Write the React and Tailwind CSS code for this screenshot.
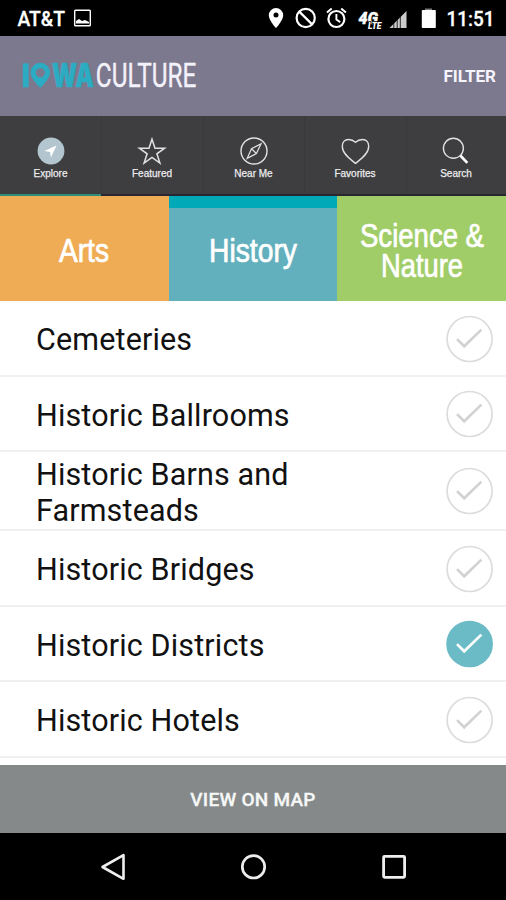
import { useState } from 'react';

const NAV_ITEMS = [
  { name: 'Explore', width: 'w-[101px]' },
  { name: 'Featured', width: 'w-[102px]' },
  { name: 'Near Me', width: 'w-[101px]' },
  { name: 'Favorites', width: 'w-[102px]' },
  { name: 'Search', width: 'w-[100px]' },
];

const TABS = [
  { label: 'Arts', lines: [{ text: 'Arts', width: 50 }], bg: 'bg-[#efac55]', bar: 'bg-[#efac55]' },
  { label: 'History', lines: [{ text: 'History', width: 88 }], bg: 'bg-[#62b0bd]', bar: 'bg-[#00a9b7]' },
  {
    label: 'Science & Nature',
    lines: [{ text: 'Science &', width: 124 }, { text: 'Nature', width: 82 }],
    bg: 'bg-[#a0cd67]',
    bar: 'bg-[#a0cd67]',
  },
];

const CATEGORIES = [
  { name: 'Cemeteries', height: 'h-[76px]' },
  { name: 'Historic Ballrooms', height: 'h-[75px]' },
  { name: 'Historic Barns and Farmsteads', height: 'h-[79px]' },
  { name: 'Historic Bridges', height: 'h-[76px]' },
  { name: 'Historic Districts', height: 'h-[75px]' },
  { name: 'Historic Hotels', height: 'h-[76px]' },
];

function StatusBar() {
  return (
    <div className="flex h-9 shrink-0 items-center bg-black text-white">
      <svg viewBox="0 0 506 36" className="h-9 w-full" fill="none" stroke="#fff">
        <g fill="#fff" stroke="#fff" strokeWidth="0.3" fontFamily="Roboto, sans-serif" fontWeight="500">
          <text x="17.5" y="26" fontSize="20.5" textLength="47.5" lengthAdjust="spacingAndGlyphs">AT&amp;T</text>
          <text x="446.5" y="26" fontSize="20.5" textLength="48" lengthAdjust="spacingAndGlyphs">11:51</text>
        </g>
        {/* picture */}
        <rect x="74.7" y="10.2" width="15.6" height="15.6" rx="0.8" strokeWidth="1.4" />
        <path d="M76 23.5v-2.5l3-2 3 2 3-1 4 2v1.5z" fill="#fff" stroke="none" />
        {/* location */}
        <path
          d="M276 8a7.2 7.2 0 0 0-7.2 7.3c0 5 7.2 12.9 7.2 12.9s7.2-7.9 7.2-12.9A7.2 7.2 0 0 0 276 8zm0 4.6a2.5 2.5 0 1 1 0 5 2.5 2.5 0 0 1 0-5z"
          fill="#fff"
          fillRule="evenodd"
          stroke="none"
        />
        {/* blocked */}
        <circle cx="305.7" cy="18" r="9.1" strokeWidth="2.2" />
        <path d="M299.3 11.6l12.8 12.8" strokeWidth="2.2" />
        {/* alarm */}
        <circle cx="336.4" cy="19" r="8" strokeWidth="2.2" />
        <path d="M336.4 14v5.5l3.8 2.6" strokeWidth="1.9" />
        <path d="M327 12.5l4.7-4M341.2 8.5l4.7 4" strokeWidth="2" />
        {/* network */}
        <g fill="#fff" fontFamily="Roboto, sans-serif" fontWeight="900" fontStyle="italic">
          <text x="358.5" y="23.5" fontSize="16" stroke="#fff" strokeWidth="0.4" textLength="19.5" lengthAdjust="spacingAndGlyphs">4G</text>
          <text x="368" y="28.6" fontSize="8.4" stroke="#000" strokeWidth="1.4" paintOrder="stroke" textLength="13.5" lengthAdjust="spacingAndGlyphs">LTE</text>
        </g>
        {/* signal */}
        <path d="M389.5 28l17-17v17z" fill="#ccc" stroke="none" />
        <path d="M393.8 22v7M397.2 18v11M400.3 15v14" stroke="#000" strokeWidth="0.8" />
        {/* battery */}
        <path d="M425 8.5h7v2h-7z" fill="#777" stroke="none" />
        <rect x="421.8" y="10" width="14" height="18" rx="0.8" fill="#fff" stroke="none" />
      </svg>
    </div>
  );
}

function Logo() {
  return (
    <svg viewBox="0 0 176 48" className="h-12 w-[176px] overflow-visible" role="img" aria-label="Iowa Culture">
      <g fill="#2cacc3" stroke="#2cacc3" fontFamily="Inter, sans-serif" fontWeight="900" fontSize="33">
        <rect x="0.8" y="11.3" width="5.8" height="24" stroke="none" />
        <path
          d="M18.3 10.8a9.7 9.7 0 0 0-9.7 9.8c0 6.4 9.7 15.4 9.7 15.4s9.7-9 9.7-15.4a9.7 9.7 0 0 0-9.7-9.8zm0 5.4a4.6 4.6 0 1 1 0 9.2 4.6 4.6 0 0 1 0-9.2z"
          fillRule="evenodd"
          stroke="none"
        />
        <text x="29.8" y="35.3" strokeWidth="0.4" textLength="42" lengthAdjust="spacingAndGlyphs">WA</text>
      </g>
      <text x="73.8" y="35.3" fill="#f3f2fb" stroke="#f3f2fb" strokeWidth="0.4" fontFamily="Roboto, sans-serif" fontSize="33.5" textLength="100.6" lengthAdjust="spacingAndGlyphs">
        CULTURE
      </text>
    </svg>
  );
}

function NavIcon({ name }) {
  return (
    <svg viewBox="0 0 30 30" className="h-[30px] w-[30px]" fill="none" stroke="#e2e2e4" strokeWidth="1.4">
      {name === 'Explore' && (
        <>
          <circle cx="15" cy="15" r="13.4" fill="#b3c6d0" stroke="none" />
          <path d="M20.5 9.5l-12 5.6 5.6.8.8 5.6z" fill="#fff" stroke="none" />
        </>
      )}
      {name === 'Featured' && (
        <path d="M15 3.2l3 9h9.6l-7.7 5.6 3 9.2-7.9-5.7L7.1 27l3-9.2-7.7-5.6H12z" strokeWidth="1.5" />
      )}
      {name === 'Near Me' && (
        <>
          <circle cx="15" cy="15" r="13" />
          <path d="M22 7.8l-9.5 5-4.3 9.5 9.2-4.8zM12.5 12.8l4.9 4.7" strokeWidth="1.2" />
        </>
      )}
      {name === 'Favorites' && (
        <path d="M15.5 27.4C11.5 23.9 2.3 18.5 2.3 10.3 2.3 6 5 3.5 8.5 3.5c3.1 0 5.1 1 7 2.8 1.9-1.8 3.9-2.8 7-2.8 3.5 0 6.2 2.5 6.2 6.8 0 8.2-9.2 13.6-13.2 17.1z" />
      )}
      {name === 'Search' && (
        <>
          <circle cx="12.4" cy="12.3" r="10" />
          <path d="M19.3 19.5l7 7.3" stroke="#fff" strokeWidth="2.6" />
        </>
      )}
    </svg>
  );
}

function CheckMark({ checked }) {
  return (
    <svg viewBox="0 0 48 48" className="mt-px h-12 w-12 shrink-0" fill="none">
      <circle
        cx="23.6"
        cy="24"
        r="22.5"
        strokeWidth="1.7"
        className={checked ? 'fill-[#6abbc6] stroke-[#6abbc6]' : 'fill-white stroke-[#dcdcdc]'}
      />
      <path d="M11 24.1l7.2 7.2L35.4 14.6" strokeWidth="2.7" className={checked ? 'stroke-white' : 'stroke-[#d2d2d2]'} />
    </svg>
  );
}

export default function App() {
  const [activeNav, setActiveNav] = useState('Explore');
  const [selected, setSelected] = useState(['Historic Districts']);

  const toggle = (name) => {
    setSelected((list) => (list.includes(name) ? list.filter((n) => n !== name) : [...list, name]));
  };

  return (
    <div className="flex h-[900px] w-[506px] flex-col overflow-hidden bg-white font-['Roboto',sans-serif]">
      <StatusBar />

      <header className="flex h-20 shrink-0 items-center justify-between bg-[#7c788d] pr-[10px] pl-[22px]">
        <Logo />
        <button className="pt-[2px] text-[17px] font-bold text-[#f5f4fc]">FILTER</button>
      </header>

      <nav className="flex h-20 shrink-0 bg-[#3e3e40]">
        {NAV_ITEMS.map(({ name, width }) => (
          <button
            key={name}
            onClick={() => setActiveNav(name)}
            className={`flex flex-col items-center border-b-2 pt-5 ${width} ${
              activeNav === name ? 'border-[#2d8c7c]' : 'border-[#29262f] shadow-[inset_1px_0_0_#39393b]'
            }`}
          >
            <NavIcon name={name} />
            <span className="mt-[2px] font-['Liberation_Sans',sans-serif] text-[10px] leading-3 text-[#ececee] [-webkit-text-stroke:0.25px_#ececee]">
              {name}
            </span>
          </button>
        ))}
      </nav>

      <div className="grid h-[105px] shrink-0 grid-cols-3">
        {TABS.map((tab) => (
          <button key={tab.label} className={`flex flex-col ${tab.bg}`}>
            <span className={`h-3 w-full shrink-0 ${tab.bar}`} />
            <span className="flex w-full flex-1 flex-col items-center justify-center pb-[5px]">
              {tab.lines.map((line) => (
                <svg key={line.text} width={line.width} height="30" className="overflow-visible">
                  <text
                    x="0"
                    y="25"
                    fill="#fff"
                    stroke="#fff"
                    strokeWidth="0.7"
                    fontFamily="Liberation Sans, sans-serif"
                    fontSize="32.5"
                    textLength={line.width}
                    lengthAdjust="spacingAndGlyphs"
                  >
                    {line.text}
                  </text>
                </svg>
              ))}
            </span>
          </button>
        ))}
      </div>

      <ul className="flex-1 overflow-hidden">
        {CATEGORIES.map((item) => (
          <li
            key={item.name}
            onClick={() => toggle(item.name)}
            className={`flex items-center justify-between border-b-2 border-[#f0f0f0] pr-3 pl-9 ${item.height}`}
          >
            <span className="w-[300px] pt-1 text-[30.5px] leading-9 tracking-[0.15px] text-[#111]">{item.name}</span>
            <CheckMark checked={selected.includes(item.name)} />
          </li>
        ))}
      </ul>

      <button className="h-[68px] shrink-0 bg-[#858989] pt-[3px] text-[19px] font-medium tracking-[0.25px] text-[#f6f8f8] [-webkit-text-stroke:0.3px_#f6f8f8]">
        VIEW ON MAP
      </button>

      <div className="flex h-[67px] shrink-0 items-center justify-between bg-black px-[98px]">
        <svg viewBox="0 0 30 30" className="h-[30px] w-[30px]" fill="none" stroke="#eee" strokeWidth="2.6" strokeLinejoin="round">
          <path d="M25.5 3.2v23.6L4.5 15z" />
        </svg>
        <svg viewBox="0 0 30 30" className="h-[30px] w-[30px]" fill="none" stroke="#eee" strokeWidth="2.7">
          <circle cx="15.5" cy="14.8" r="11.2" />
        </svg>
        <svg viewBox="0 0 30 30" className="h-[30px] w-[30px]" fill="none" stroke="#eee" strokeWidth="2.8">
          <rect x="5.6" y="4.3" width="21" height="21" rx="1" />
        </svg>
      </div>
    </div>
  );
}
